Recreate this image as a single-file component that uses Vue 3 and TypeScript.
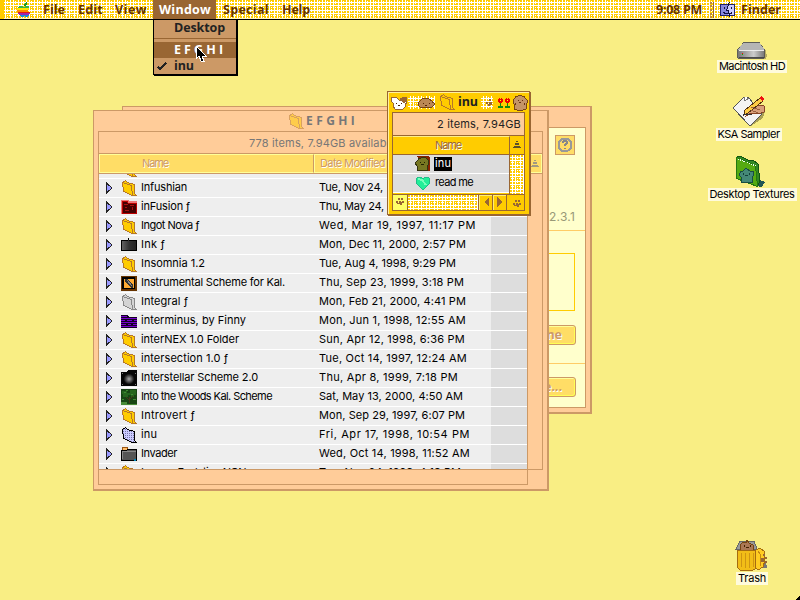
<script setup lang="ts">
import type { Directive } from 'vue'

interface Entry {
  icon: string
  name: string
  nameWidth: number
  date: string
  dateWidth: number
}

// Tracks a run of text so that it occupies the given width in pixels.
const vFit: Directive<HTMLElement, number> = {
  mounted(el, binding) {
    const length = (el.textContent ?? '').trim().length
    const width = el.getBoundingClientRect().width
    el.style.letterSpacing = `${(binding.value - width) / Math.max(1, length)}px`
  },
}

const menus = [
  { label: 'File', width: 22, id: 'm-file' },
  { label: 'Edit', width: 25, id: 'm-edit' },
  { label: 'View', width: 32, id: 'm-view' },
  { label: 'Window', width: 52, id: 'm-window' },
  { label: 'Special', width: 46, id: 'm-special' },
  { label: 'Help', width: 28, id: 'm-help' },
]

const entries: Entry[] = [
  { icon: 'folder', name: 'Infushian', nameWidth: 46, date: 'Tue, Nov 24,', dateWidth: 64 },
  { icon: 'red', name: 'inFusion ƒ', nameWidth: 49, date: 'Thu, May 24,', dateWidth: 65 },
  { icon: 'folder', name: 'Ingot Nova ƒ', nameWidth: 58, date: 'Wed, Mar 19, 1997, 11:17 PM', dateWidth: 157 },
  { icon: 'ink', name: 'Ink ƒ', nameWidth: 24, date: 'Mon, Dec 11, 2000, 2:57 PM', dateWidth: 147 },
  { icon: 'folder', name: 'Insomnia 1.2', nameWidth: 64, date: 'Tue, Aug 4, 1998, 9:29 PM', dateWidth: 137 },
  { icon: 'instrument', name: 'Instrumental Scheme for Kal.', nameWidth: 144, date: 'Thu, Sep 23, 1999, 3:18 PM', dateWidth: 145 },
  { icon: 'grey', name: 'Integral ƒ', nameWidth: 47, date: 'Mon, Feb 21, 2000, 4:41 PM', dateWidth: 147 },
  { icon: 'purple', name: 'interminus, by Finny', nameWidth: 105, date: 'Mon, Jun 1, 1998, 12:55 AM', dateWidth: 147 },
  { icon: 'folder', name: 'interNEX 1.0 Folder', nameWidth: 98, date: 'Sun, Apr 12, 1998, 6:36 PM', dateWidth: 146 },
  { icon: 'folder', name: 'intersection 1.0 ƒ', nameWidth: 87, date: 'Tue, Oct 14, 1997, 12:24 AM', dateWidth: 148 },
  { icon: 'star', name: 'Interstellar Scheme 2.0', nameWidth: 117, date: 'Thu, Apr 8, 1999, 7:18 PM', dateWidth: 139 },
  { icon: 'woods', name: 'Into the Woods Kal. Scheme', nameWidth: 131, date: 'Sat, May 13, 2000, 4:50 AM', dateWidth: 144 },
  { icon: 'folder', name: 'Introvert ƒ', nameWidth: 54, date: 'Mon, Sep 29, 1997, 6:07 PM', dateWidth: 146 },
  { icon: 'inu', name: 'inu', nameWidth: 16, date: 'Fri, Apr 17, 1998, 10:54 PM', dateWidth: 151 },
  { icon: 'invader', name: 'Invader', nameWidth: 36, date: 'Wed, Oct 14, 1998, 11:52 AM', dateWidth: 151 },
  { icon: 'folder', name: 'Inverse Evolution NON', nameWidth: 105, date: 'Tue, Nov 24, 1998, 4:18 PM', dateWidth: 142 },
]
</script>

<template>
  <svg class="defs" width="0" height="0">
    <defs>
      <pattern id="dots" width="2" height="2" patternUnits="userSpaceOnUse">
        <rect width="2" height="2" fill="#ccccff" /><rect width="1" height="1" fill="#7777aa" />
      </pattern>
      <linearGradient id="metal" x2="1"><stop stop-color="#777" /><stop offset=".6" stop-color="#ccc" /><stop offset="1" stop-color="#777" /></linearGradient>
      <linearGradient id="inkfill" x2="1"><stop stop-color="#666" /><stop offset=".5" stop-color="#333" /><stop offset="1" stop-color="#222" /></linearGradient>
      <radialGradient id="glow"><stop stop-color="#aaa" /><stop offset=".6" stop-color="#444" /><stop offset="1" stop-color="#000" /></radialGradient>
      <symbol id="i-shape" viewBox="0 0 16 16">
        <path d="M1.500 2.500 4.500.5 6.500 2.500 13.500 4.500V13.500L15.500 15.500H11.500L2.500 11.500Z" />
        <path d="M1.500 2.500 10.500 5.500 11.500 15.500" fill="none" />
      </symbol>
      <symbol id="i-folder" viewBox="0 0 16 16"><use href="#i-shape" fill="#ffcc00" stroke="#b5772a" /></symbol>
      <symbol id="i-grey" viewBox="0 0 16 16"><use href="#i-shape" fill="#d4d4d4" stroke="#888" /></symbol>
      <symbol id="i-inu" viewBox="0 0 16 16"><path d="M1.500 2.500 4.500.5 6.500 2.500 13.500 4.500V13.500L15.500 15.500H11.500L2.500 11.500Z" fill="url(#dots)" stroke="#000" /></symbol>
      <symbol id="i-red" viewBox="0 0 16 16">
        <path d="M0 1h7l1 1h8v13H0Z" fill="#ee7777" /><path d="M1 2h5l1 2h8v10H1Z" fill="#440000" stroke="#bb0000" />
        <path d="M3 5.500h4M4 8h2M9 6.500h4M11 8v3M4 11.500h4" stroke="#aa1111" fill="none" />
      </symbol>
      <symbol id="i-ink" viewBox="0 0 16 16"><path d="M.5 3.500h6l1-1.500 1 1.500h7v10H.5Z" fill="url(#inkfill)" stroke="#000" /></symbol>
      <symbol id="i-instrument" viewBox="0 0 16 16">
        <rect y="1" width="16" height="15" fill="#663300" /><rect x="1" y="2" width="13" height="12" fill="#000" />
        <rect x="3" y="4" width="10" height="9" fill="#ffaa33" /><path d="M4 4h3l5 6v3h-1L4 7Z" fill="#333" /><path d="m6 5 5 6" stroke="#888" />
      </symbol>
      <symbol id="i-purple" viewBox="0 0 16 16">
        <path d="M0 2h7l1 2h8v11H0Z" fill="#110022" /><path d="M0 3.500h6M0 5.500h16M0 7.500h4m2 0h5m2 0h3M0 9.500h16M0 11.500h5m2 0h3m2 0h4M0 13.500h16" stroke="#7700cc" />
      </symbol>
      <symbol id="i-star" viewBox="0 0 16 16"><path d="M0 2h6l1-2h9v16H0Z" fill="#050505" /><circle cx="8" cy="9" r="5.500" fill="url(#glow)" /><path d="M1 3h1M14 3h1M1 14h1M14 14h1" stroke="#777" /></symbol>
      <symbol id="i-woods" viewBox="0 0 16 16">
        <rect width="16" height="16" fill="#174514" /><path d="M1 2h5v2h5v2H7v2H2ZM9 1h6v5h-2v2h-3Z" fill="#25651e" /><path d="M0 13h6v2h10v1H0Z" fill="#478a37" />
        <path d="M8 8v6M5 8l3 3 4-4" stroke="#47351b" fill="none" /><path d="M3 3h2M10 5h2M12 10h3M1 10h2M5 1h2" stroke="#3f8a33" />
      </symbol>
      <symbol id="i-invader" viewBox="0 0 16 16"><path d="m1 4 1-3h4l1 3Z" fill="#ffbb66" stroke="#995511" /><path d="M.5 4.500h5l1-1h9v11H.5Z" fill="#555" stroke="#000" /><path d="M1.500 13V5.500h13" stroke="#888" fill="none" /><path d="M13 13h2v2h-2Z" fill="#0088bb" /></symbol>
      <symbol id="i-paw" viewBox="0 0 10 10"><path d="M1 4h2v2H1ZM3 1h2v2H3ZM6 1h2v2H6ZM7 4h2v2H7ZM4 4h2v1h1v3H5V7H2V6h2Z" fill="#996633" /></symbol>
      <symbol id="i-sort" viewBox="0 0 10 10"><path d="M4 .5h2M3 2.500h4M2 4.500h6M1 6.500h8M0 8.500h10" stroke="currentColor" fill="none" /></symbol>
    </defs>
  </svg>

  <main class="desktop">
    <header class="menubar plaid">
      <svg class="apple" width="14" height="16" viewBox="0 0 14 16">
        <path d="M7 4V2l3-2v2L8 4Z" fill="#159b27" />
        <path d="M2 4h3l2 1 2-1h3v2H1V5Z" fill="#39b54a" /><path d="M1 6h11l-1 2H0V7Z" fill="#ffe600" />
        <path d="M0 8h11v2H0Z" fill="#ff8a00" /><path d="M0 10h12l1 1H1Z" fill="#e61717" /><path d="M1 11h12l-1 2H2Z" fill="#a326a8" /><path d="M2 13h10l-2 2H8l-1-1-1 1H4Z" fill="#168ce0" />
      </svg>
      <nav class="menus">
        <span v-for="m in menus" :key="m.id" class="menu" :class="m.id"><span v-fit="m.width" class="run">{{ m.label }}</span></span>
      </nav>
      <span class="clock"><span v-fit="46" class="run">9:08 PM</span></span>
      <span class="divider"></span>
      <svg class="finder" width="16" height="16" viewBox="0 0 16 16">
        <path d="M.5 2.500h14v11H.5Z" fill="#ccccff" stroke="#222266" /><path d="M1 3h7L6 8v1h2v4H1Z" fill="#8888dd" />
        <path d="M9.500 0 6.500 8.500h2l1 7M4.500 5v2M11.500 5v2M3.500 10.500l2 1h5l2-1" fill="none" stroke="#111144" />
      </svg>
      <span v-fit="40" class="run">Finder</span>
    </header>

    <section class="window installer">
      <div class="installer-panel">
        <div class="help-area">
          <svg class="help-icon" width="20" height="20" viewBox="0 0 20 20">
            <rect x=".5" y=".5" width="19" height="19" fill="#ffdd66" stroke="#cc9966" /><circle cx="10" cy="10" r="6.500" fill="#ffdd66" stroke="#999" stroke-width="2" />
            <path d="M8 8V7l1-1h2l1 1v1l-2 2v1M10 13v1" fill="none" stroke="#888" stroke-width="1.500" />
          </svg>
          <span class="version"><span v-fit="26" class="run">2.3.1</span></span>
        </div>
        <div class="choice-area"><div class="choice-box"></div><span class="push">ne</span></div>
        <div class="close-area"><span class="push">e...</span></div>
      </div>
    </section>

    <section class="window list-window">
      <div class="title">
        <svg class="dim" width="16" height="16"><use href="#i-folder" /></svg>
        <span v-fit="49" class="run">E F G H I</span>
      </div>
      <div class="list-box">
        <div class="info"><span v-fit="147" class="run">778 items, 7.94GB available</span></div>
        <div class="columns">
          <span class="col name-col"><span v-fit="26" class="run">Name</span></span>
          <span class="col date-col"><span v-fit="65" class="run">Date Modified</span></span>
          <span class="col sort-col"><svg width="8" height="8"><use href="#i-sort" /></svg></span>
        </div>
        <div class="list-body">
          <div class="rows">
            <div class="row peek"><svg class="icon" width="16" height="16"><use href="#i-folder" /></svg></div>
            <div v-for="e in entries" :key="e.name" class="row">
              <svg class="twist" width="8" height="12" viewBox="0 0 8 12"><path d="M1.500 1v10l5.500-5Z" fill="#9999ff" stroke="#222" /></svg>
              <svg class="icon" width="16" height="16"><use :href="'#i-' + e.icon" /></svg>
              <span class="name"><span v-fit="e.nameWidth" class="run">{{ e.name }}</span></span>
              <span class="date"><span v-fit="e.dateWidth" class="run">{{ e.date }}</span></span>
              <span class="size"></span>
            </div>
          </div>
          <div class="rail"></div>
        </div>
      </div>
      <div class="bottom-rail"></div>
    </section>

    <section class="popup">
      <div class="popup-title">
        <svg class="pup" width="17" height="15" viewBox="0 0 17 15">
          <path d="M1 2h4l3 3h2l3-3h2l1 5-1 2-1-1v4l-2 2H4l-2-3V8L0 6Z" fill="#fff" stroke="#996633" /><path d="M9 5V3l4-1h2v5l-3 1Z" fill="#996633" /><path d="M5 8.500h1M10 8.500h1M7 10.500h2" stroke="#442200" />
        </svg>
        <span class="strip left plaid">
          <svg width="18" height="11" viewBox="0 0 18 11"><path d="M1 6v2l2 2h12l2-2V6l-2-1V4l-3-2-2-1H8L5 2 3 4Z" fill="#bb8855" stroke="#774411" /><path d="M6 6v1M12 6v1M8 8.500h2" stroke="#552200" fill="none" /></svg>
        </span>
        <svg class="outline" width="16" height="16"><use href="#i-shape" fill="#ffcc00" stroke="#b5772a" /></svg>
        <span v-fit="20" class="run">inu</span>
        <span class="strip right plaid"><svg width="8" height="10" viewBox="0 0 8 10"><path d="M4 2h2v2H4ZM1 5h2v2H1ZM4 5h3v3H5v1H3V7h1Z" fill="#996633" /></svg></span>
        <svg class="flowers" width="14" height="14" viewBox="0 0 14 14">
          <path d="M1 1h1V0h1v1h1V0h1v1h1v3H5v1H2V4H1ZM8 1h1V0h1v1h1V0h1v1h1v3h-1v1H9V4H8Z" fill="#ee0000" /><path d="M3 2h1v1H3ZM10 2h1v1h-1Z" fill="#ff0" /><path d="M3 5h1v3h2v2H1V8h2ZM10 5h1v3h2v2H8V8h2Z" fill="#118811" />
        </svg>
        <svg width="16" height="17" viewBox="0 0 16 17"><path d="M4 2h2l2-1 2 1h2l1 2 2 2v3l-1 1v5l-3 1H5l-3-1v-5L1 9V6l2-2Z" fill="#c49466" stroke="#774411" /><path d="M6 6v1M10 6v1M7 8.500h2M3.500 9v2M12.500 9v2" stroke="#663311" fill="none" /></svg>
      </div>
      <div class="popup-box">
        <div class="popup-info"><span v-fit="84" class="run">2 items, 7.94GB</span></div>
        <div class="popup-header"><span class="popup-name"><span v-fit="26" class="run">Name</span></span><span class="popup-sort"><svg width="8" height="8"><use href="#i-sort" /></svg></span></div>
        <div class="popup-body">
          <div class="popup-rows">
            <div class="popup-row">
              <svg width="16" height="16" viewBox="0 0 16 16"><path d="M2 0h12l1 2v13H9l-2-2Z" fill="#882200" /><path d="M4 2h2l2-1 3 1 2 2 1 4-2 2v4H2v-4L0 7l3-3Z" fill="#777722" stroke="#333311" /><path d="M5 6v1M9 6v1M6 8h3" stroke="#222200" /></svg>
              <span class="selected"><span v-fit="16" class="run">inu</span></span>
            </div>
            <div class="popup-row">
              <svg width="16" height="16" viewBox="0 0 16 16"><path d="M8 15 2 9 1 4l2-2h3l2 2 2-2h3l2 2-1 5Z" fill="#22ee99" stroke="#22bb88" /><path d="m3 4 4 1 4 5" stroke="#77ffbb" fill="none" stroke-width="2" /></svg>
              <span class="plain"><span v-fit="38" class="run">read me</span></span>
            </div>
          </div>
          <div class="vscroll plaid"></div>
        </div>
        <div class="hscroll">
          <span class="paw-button"><svg width="10" height="10"><use href="#i-paw" /></svg></span>
          <span class="track plaid"></span>
          <span class="arrow"><svg width="6" height="10"><path d="M6 0v10L1 5Z" /></svg></span>
          <span class="arrow"><svg width="6" height="10"><path d="M0 0v10l5-5Z" /></svg></span>
          <span class="grow"><svg width="10" height="10"><use href="#i-paw" /></svg></span>
        </div>
      </div>
    </section>

    <div class="item hd">
      <svg width="32" height="19" viewBox="0 0 32 19"><path d="m8 17 22 1 2-3-2-8Z" fill="#b8ad60" /><path d="m1 8 6-7h17l5 7v9H1Z" fill="url(#metal)" stroke="#555" /><path d="M7 1h17l5 7H1Z" fill="#b5b5b5" /><path d="M2 8.500h27" stroke="#eee" /><path d="M5 12h2v1H5Z" fill="#f00" /><path d="M5 13h2v1H5Z" fill="#0b0" /><path d="M2 16.500h27" stroke="#444" /></svg>
      <span class="label"><span v-fit="66" class="run">Macintosh HD</span></span>
    </div>
    <div class="item ksa">
      <svg width="34" height="33" viewBox="0 0 34 33"><path d="m19 31 12-8 2-7-6-2Z" fill="#aaa055" /><path d="M1 13 12 2l5 1 13 16-12 12Z" fill="#f4f4f4" stroke="#555" /><path d="m12 2 1 4 4-3" fill="#fff" stroke="#777" /><path d="m13 15 7-5 12 1v6l-6 2-7-1-5 3 2-5Z" fill="#d9a07b" stroke="#884422" /><path d="m13 15 15-12 3 3-15 12-4 2Z" fill="#ffcc44" stroke="#553311" /><path d="m27 3 2-2 3 3-2 2Z" fill="#e11" /><path d="m11 19 9 0" stroke="#333" /><path d="m19 12 9 3m-9 0 7 3" stroke="#996040" /></svg>
      <span class="label"><span v-fit="62" class="run">KSA Sampler</span></span>
    </div>
    <div class="item textures">
      <svg width="32" height="33" viewBox="0 0 32 33"><path d="m22 31 4-6 5 2-3 5Z" fill="#225555" /><path d="m3 5 0-4 3 0 8 4 5 0 5 4 2 17-2 4Z" fill="#338822" stroke="#115511" /><path d="M2.500 2.500 21.500 10.500 23.500 31.500 2.500 23.500Z" fill="#55aa11" stroke="#227711" /><path d="m4 4 18 7" stroke="#eeffee" stroke-dasharray="1 1" /><path d="M7 16h2l3-3 4 3h3l1 4-2 2v5H7v-5l-2-2Z" fill="#448877" stroke="#184d44" /><path d="M9 18v2M15 18v2M11 20h3" stroke="#113f38" /></svg>
      <span class="label"><span v-fit="85" class="run">Desktop Textures</span></span>
    </div>
    <div class="item trash">
      <svg width="34" height="33" viewBox="0 0 34 33"><path d="m22 31 5-2h5l-1-7-7-1Z" fill="#777" /><path d="M1 10 5 2h14l3 8Z" fill="#999" stroke="#666" /><path d="M5 11V6l3-3 3 1 1-3 2 3 4 2v5Z" fill="#aa7755" stroke="#774411" /><path d="M9 6v2M15 6v2M11 8h3" stroke="#442200" /><path d="M2 11h19l-1 19-2 1H5l-2-2Z" fill="#f2bd17" stroke="#a66c10" /><path d="M6 14v14M10 14v15M14 14v15M18 14v14" stroke="#cf9512" /><path d="m21 11 4-2 4 3 1 9-2 7-5 3-3-3Z" fill="#ffcc22" stroke="#a66c10" /><path d="m23 12 3 4-1 11" stroke="#c68910" fill="none" /><path d="M28 15h2v2h-2ZM30 18h2v2h-2ZM26 19h3v4h-3ZM30 22h2v2h-2Z" fill="#996633" /></svg>
      <span class="label"><span v-fit="28" class="run">Trash</span></span>
    </div>

    <div class="dropdown">
      <div class="choice desktop-choice"><span v-fit="51" class="run">Desktop</span></div>
      <div class="rule"></div>
      <div class="choice active"><span v-fit="49" class="run">E F G H I</span></div>
      <div class="choice last"><svg class="check" width="10" height="9"><path d="m1 5 2 2 6-6" fill="none" stroke="#222" stroke-width="2" /></svg><span v-fit="20" class="run">inu</span></div>
    </div>
    <svg class="cursor" width="12" height="18" viewBox="0 0 12 18"><path d="M1 1v13l3-3 2 5h3l-2-5h4Z" fill="#000" stroke="#fff" /></svg>
    <svg class="corner" width="5" height="5"><path d="M5 0v5H0l3-2Z" /></svg>
  </main>
</template>

<style>
body { overflow: hidden; }
</style>

<style scoped>
.desktop { position: relative; width: 800px; height: 600px; overflow: hidden; background: #f9ee84; color: #000; font: 11px/13px Inter, "Liberation Sans", sans-serif; }
.desktop *, .desktop { box-sizing: border-box; }
.defs { position: absolute; }
svg { display: block; flex: none; shape-rendering: crispEdges; }
.run { display: inline-block; white-space: pre; }
.plaid {
  background-color: #ffcc00;
  background-image:
    conic-gradient(from 270deg at 1px 8px, #fff 25%, transparent 0),
    conic-gradient(from 270deg at 1px 8px, #fff 25%, transparent 0),
    conic-gradient(from 270deg at 8px 1px, #fff 25%, transparent 0),
    conic-gradient(from 270deg at 8px 1px, #fff 25%, transparent 0),
    conic-gradient(from 270deg at 1px 1px, #fff 25%, transparent 0),
    conic-gradient(from 270deg at 1px 1px, #fff 25%, transparent 0);
  background-size: 8px 8px, 8px 8px, 8px 8px, 8px 8px, 8px 2px, 2px 8px;
  background-position: 2px 0, 5px 0, 0 2px, 0 5px, 7px 1px, 1px 7px;
}
.menubar { display: flex; height: 20px; align-items: center; padding-right: 19px; border-bottom: 1px solid #000; box-shadow: inset 4px 0 #ffcc00, inset 0 -1px #fff3bb; color: #663300; font: bold 12.5px/18px "Open Sans", sans-serif; }
.apple { margin-left: 17px; }
.menus { display: flex; align-self: stretch; margin-left: 5px; }
.menu { padding: 1px 7px 0; }
.m-edit { padding: 1px 6px 0; }
.m-view { padding: 1px 6px 0; }
.m-window { width: 63px; padding: 1px 6px 0; background: #996633; color: #fff; }
.m-help { padding-left: 6px; }
.clock { margin-left: auto; }
.divider { width: 4px; height: 16px; margin: 0 6px 0 8px; border-left: 2px dotted #bb8844; border-right: 1px solid #996633; }
.finder { margin-right: 5px; }
.dropdown { position: absolute; left: 153px; top: 19px; width: 84px; height: 56px; border: 1px solid #000; background: #cc9966; box-shadow: 1px 1px #000; color: #222; font: bold 12.5px/16px "Open Sans", sans-serif; }
.choice { display: flex; height: 16px; padding-left: 20px; }
.desktop-choice { height: 18px; }
.rule { height: 1px; margin-bottom: 3px; background: #996633; }
.active { background: #996633; color: #fff; }
.last { padding-left: 2px; }
.check { margin: 4px 7px 0 1px; }
.cursor { position: absolute; left: 195px; top: 45px; }
.corner { position: absolute; right: 0; bottom: 0; }

.window { position: absolute; background: #ffcc99; border: 1px solid #cc9966; border-width: 1px 2px 2px 1px; }
.installer { left: 122px; top: 106px; width: 470px; height: 308px; padding: 20px 4px 4px; }
.installer-panel { height: 281px; border: 1px solid #cc9966; background: #ffffcc; }
.help-area { display: flex; flex-direction: column; align-items: flex-end; height: 103px; padding: 7px 10px 0; border-bottom: 1px solid #ffcc66; }
.version { margin-top: 55px; color: #999977; font-size: 12px; }
.choice-area { display: flex; flex-direction: column; align-items: flex-end; height: 133px; padding: 22px 9px 0; border-bottom: 1px solid #ffcc66; }
.choice-box { width: 150px; height: 58px; margin-right: 1px; border: 1px solid #ffcc00; }
.push { width: 66px; height: 20px; margin-top: 14px; padding-right: 13px; border: 1px solid #cc9966; border-radius: 3px; background: #ffdd66; box-shadow: inset -1px -1px #ffff55, inset 1px 1px #ffff99; color: #cc9966; text-align: right; font: bold 12.5px/17px "Open Sans", sans-serif; text-shadow: 1px 1px #fff; }
.close-area { display: flex; justify-content: flex-end; padding-right: 9px; }
.close-area .push { margin-top: 13px; }

.list-window { left: 93px; top: 110px; width: 456px; height: 381px; padding: 0 4px; }
.title { display: flex; height: 20px; padding: 2px 0 0 190px; color: #777; font: bold 12px/16px "Open Sans", sans-serif; }
.title .run { margin-left: 2px; }
.dim { opacity: .5; }
.list-box { width: 445px; height: 339px; border: 1px solid #cc9966; }
.info { height: 21px; padding: 5px 0 0 150px; color: #777; }
.columns { display: flex; height: 21px; border: 1px solid #cc9966; border-width: 1px 0; color: #cc9966; }
.col { border: 1px solid #ffff99; background: #ffdd66; text-shadow: 1px 1px #fff; line-height: 17px; }
.name-col { width: 215px; padding-left: 42px; border-right-color: #cc9966; }
.date-col { width: 214px; padding-left: 5px; border-right-color: #cc9966; }
.sort-col { flex: 1; padding: 5px 2px; color: #888; }
.list-body { display: flex; height: 295px; overflow: hidden; }
.rows { width: 428px; height: 295px; overflow: hidden; background: #eee; }
.row { display: flex; height: 19px; padding-left: 6px; overflow: hidden; border-bottom: 1px solid #fff; }
.row.peek { height: 5px; padding-left: 14px; align-items: flex-end; }
.twist { margin-top: 3px; }
.icon { margin-left: 8px; margin-top: 1px; }
.peek .icon { margin: 0 0 1px 8px; }
.name { flex: none; width: 182px; padding: 2px 0 0 4px; }
.date { flex: none; width: 172px; padding: 2px 0 0; }
.size { flex: 1; background: #ddd; }
.rail { width: 15px; border-left: 1px solid #cc9966; }
.bottom-rail { width: 430px; height: 16px; margin-top: -1px; border: 1px solid #cc9966; }

.popup { position: absolute; left: 387px; top: 91px; width: 143px; height: 124px; padding: 0 4px 4px; border: 1px solid #996633; background: #ffcc00; box-shadow: 1px 1px #996633, inset 1px 1px #fff0a0; }
.popup-title { display: flex; align-items: center; height: 20px; margin: 0 -3px 0 -1px; color: #222; font: bold 12.5px/18px "Open Sans", sans-serif; }
.strip { display: flex; height: 13px; align-items: center; }
.strip.left { width: 27px; justify-content: flex-end; }
.outline { margin: 0 3px 0 4px; }
.strip.right { width: 12px; margin: 0 4px 0 3px; justify-content: flex-end; }
.flowers { margin: 5px 1px 0 0; }
.popup-box { width: 133px; border: 1px solid #996633; }
.popup-info { height: 22px; padding: 5px 3px 0 0; background: #ffcc99; color: #222; text-align: right; }
.popup-header { display: flex; height: 20px; border: 1px solid #996633; border-width: 1px 0; color: #996633; }
.popup-name { width: 117px; flex: none; padding-left: 42px; border-top: 1px solid #ffee88; border-right: 1px solid #996633; line-height: 17px; text-shadow: 1px 1px #fff; }
.popup-sort { padding: 5px 3px; color: #333; }
.popup-body { display: flex; height: 39px; }
.popup-rows { width: 116px; }
.popup-row { display: flex; height: 19px; padding: 1px 0 0 22px; border-bottom: 1px solid #fff; background: #ddd; }
.selected { height: 14px; margin: 1px 0 0 3px; padding: 0 1px; background: #000; color: #fff; }
.plain { padding: 1px 0 0 4px; }
.vscroll { width: 15px; border-left: 1px solid #996633; }
.hscroll { display: flex; height: 16px; border-top: 1px solid #996633; }
.paw-button { width: 15px; padding: 2px; border-right: 1px solid #996633; background: #ffff66; }
.track { width: 73px; }
.arrow { width: 14px; padding: 2px 4px; border-left: 1px solid #996633; box-shadow: inset 1px 1px #ffee77; }
.arrow path { fill: #996633; }
.grow { flex: 1; padding: 4px 2px 0 5px; border-left: 1px solid #996633; }

.item { position: absolute; display: flex; flex-direction: column; align-items: center; }
.label { height: 13px; padding: 0 2px; background: #fffbdc; line-height: 13px; }
.hd { left: 717px; top: 42px; width: 70px; }
.hd svg { height: 18px; }
.ksa { left: 715px; top: 95px; width: 67px; }
.textures { left: 708px; top: 155px; width: 88px; }
.textures svg { margin-right: 4px; }
.trash { left: 735px; top: 539px; width: 34px; }
</style>
